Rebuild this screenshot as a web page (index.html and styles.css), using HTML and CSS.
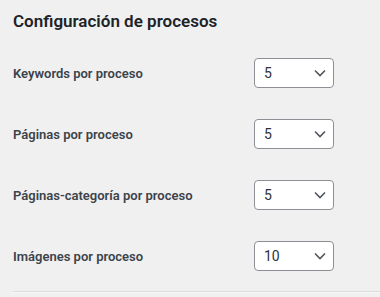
FILE: index.html
```html
<!DOCTYPE html>
<html>
<head>
  <title>Configuración de procesos</title>
  <link rel="stylesheet" href="styles.css">
</head>
<body>
  <div class="wrap">
    <h2 class="title">Configuración de procesos</h2>
    <div class="settings">
      <label class="label" for="kw">Keywords por proceso</label>
      <select id="kw" class="select"><option>5</option></select>

      <label class="label" for="pg">Páginas por proceso</label>
      <select id="pg" class="select"><option>5</option></select>

      <label class="label" for="pc">Páginas-categoría por proceso</label>
      <select id="pc" class="select"><option>5</option></select>

      <label class="label" for="im">Imágenes por proceso</label>
      <select id="im" class="select"><option>10</option></select>
    </div>
    <hr class="divider">
  </div>
</body>
</html>
```

FILE: styles.css
```css
html, body {
  margin: 0;
  padding: 0;
  background: #f0f0f1;
  font-family: Roboto, "Liberation Sans", sans-serif;
}
.wrap {
  padding: 10px 0 0 13px;
}
.title {
  margin: 0;
  font-size: 17px;
  font-weight: 600;
  line-height: 22px;
  color: #1d2327;
}
.settings {
  display: grid;
  grid-template-columns: 241px 80px;
  grid-auto-rows: 30px;
  row-gap: 31px;
  align-items: center;
  margin-top: 26px;
}
.label {
  font-size: 13px;
  font-weight: 600;
  color: #3c434a;
}
.select {
  appearance: none;
  -webkit-appearance: none;
  box-sizing: border-box;
  width: 80px;
  height: 30px;
  margin: 0;
  padding: 0 24px 0 9px;
  font-family: Roboto, "Liberation Sans", sans-serif;
  font-size: 14px;
  color: #2c3338;
  background: #fff url('data:image/svg+xml;utf8,<svg xmlns="http://www.w3.org/2000/svg" width="12" height="8" viewBox="0 0 12 8"><path d="M1 1.5l5 5 5-5" fill="none" stroke="%2350575e" stroke-width="1.6"/></svg>') no-repeat right 7px center;
  border: 1px solid #8c8f94;
  border-radius: 4px;
}
.divider {
  margin: 20px 0 0;
  border: 0;
  border-top: 1px solid #dcdcde;
  border-bottom: 1px solid #f6f7f7;
}
```
